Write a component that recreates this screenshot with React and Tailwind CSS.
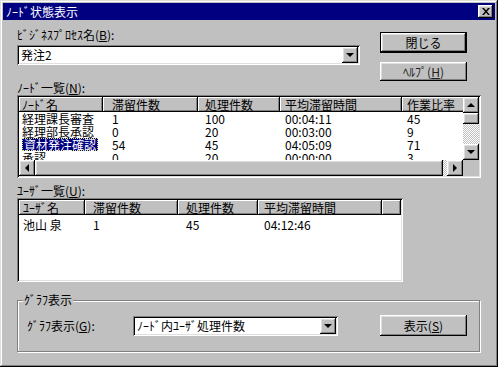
// App.jsx - Win9x style "node status" dialog
const raised = 'shadow-[inset_-1px_-1px_#000,inset_1px_1px_#fff,inset_-2px_-2px_#808080,inset_2px_2px_#dfdfdf]';
const sunken = 'shadow-[inset_1px_1px_#808080,inset_-1px_-1px_#fff,inset_2px_2px_#000,inset_-2px_-2px_#dfdfdf]';
const headerCell = 'shadow-[inset_-1px_-1px_#000,inset_1px_1px_#fff,inset_-2px_-2px_#808080]';

const nodeCols = [
  { label: 'ﾉｰﾄﾞ名', cls: 'w-[84px] pl-[3px]' },
  { label: '滞留件数', cls: 'w-[95px] pl-[9px]' },
  { label: '処理件数', cls: 'w-[82px] pl-[7px]' },
  { label: '平均滞留時間', cls: 'w-[122px] pl-[5px]' },
  { label: '作業比率', cls: 'w-[70px] pl-[5px]' },
];

const nodeRows = [
  ['経理課長審査', '1', '100', '00:04:11', '45'],
  ['経理部長承認', '0', '20', '00:03:00', '9'],
  ['資材発注確認', '54', '45', '04:05:09', '71'],
  ['承認', '0', '20', '00:00:00', '3'],
];

const userCols = [
  { label: 'ﾕｰｻﾞ名', cls: 'w-[66px] pl-[4px]' },
  { label: '滞留件数', cls: 'w-[93px] pl-[8px]' },
  { label: '処理件数', cls: 'w-[80px] pl-[8px]' },
  { label: '平均滞留時間', cls: 'w-[124px] pl-[6px]' },
  { label: '', cls: 'w-[19px]' },
];

const userRows = [['池山 泉', '1', '45', '04:12:46', '']];

function Arrow({ dir }) {
  if (dir === 'down') return <div className="w-0 h-0 border-x-[4px] border-x-transparent border-t-[4px] border-t-black" />;
  if (dir === 'up') return <div className="w-0 h-0 border-x-[4px] border-x-transparent border-b-[4px] border-b-black" />;
  if (dir === 'left') return <div className="w-0 h-0 border-y-[4px] border-y-transparent border-r-[4px] border-r-black" />;
  return <div className="w-0 h-0 border-y-[4px] border-y-transparent border-l-[4px] border-l-black" />;
}

function ArrowButton({ dir, className = '' }) {
  return (
    <div className={`bg-[#c0c0c0] flex items-center justify-center shrink-0 ${raised} ${className}`}>
      <Arrow dir={dir} />
    </div>
  );
}

const dither = 'bg-[repeating-conic-gradient(#fff_0%_25%,#c0c0c0_0%_50%)] bg-[length:2px_2px]';

function Button({ children, isDefault, className = '' }) {
  if (isDefault) {
    return (
      <div className={`w-[87px] border border-black ${className}`}>
        <div className={`h-full bg-[#c0c0c0] flex items-center justify-center ${raised}`}>{children}</div>
      </div>
    );
  }
  return (
    <div className={`w-[87px] bg-[#c0c0c0] flex items-center justify-center ${raised} ${className}`}>{children}</div>
  );
}

function Combo({ value, className = '' }) {
  return (
    <div className={`bg-white p-[2px] flex ${sunken} ${className}`}>
      <div className="flex-1 pl-[2px] leading-[15px] whitespace-nowrap overflow-hidden">{value}</div>
      <ArrowButton dir="down" className="w-[16px]" />
    </div>
  );
}

function Header({ cols }) {
  return (
    <div className="flex h-[15px] shrink-0">
      {cols.map((c, i) => (
        <div key={i} className={`${c.cls} shrink-0 h-full bg-[#c0c0c0] leading-[15px] whitespace-nowrap overflow-hidden ${headerCell}`}>
          {c.label}
        </div>
      ))}
    </div>
  );
}

function Rows({ cols, rows, selected }) {
  return rows.map((r, ri) => (
    <div key={ri} className="flex h-[13px] leading-[13px] shrink-0">
      {r.map((v, ci) => (
        <div key={ci} className={`${cols[ci].cls} ${ci === 0 ? 'pl-0' : ''} shrink-0 whitespace-nowrap overflow-hidden`}>
          {ci === 0 && ri === selected ? (
            <span className="inline-block bg-[#000080] text-white border border-dotted border-[#e0e080] leading-[11px] px-[1px]">{v}</span>
          ) : (
            v
          )}
        </div>
      ))}
    </div>
  ));
}

function NodeList() {
  return (
    <div className={`w-[464px] h-[83px] p-[2px] bg-white flex flex-col ${sunken}`}>
      <div className="flex h-[63px]">
        <div className="w-[444px] overflow-hidden flex flex-col">
          <Header cols={nodeCols} />
          <Rows cols={nodeCols} rows={nodeRows} selected={2} />
        </div>
        {/* vertical scrollbar */}
        <div className="w-[16px] flex flex-col">
          <ArrowButton dir="up" className="h-[16px]" />
          <div className={`h-[11px] bg-[#c0c0c0] ${raised}`} />
          <div className={`flex-1 ${dither}`} />
          <ArrowButton dir="down" className="h-[16px]" />
        </div>
      </div>
      {/* horizontal scrollbar */}
      <div className="flex h-[16px]">
        <div className="w-[444px] flex">
          <ArrowButton dir="left" className="w-[16px]" />
          <div className={`w-[408px] bg-[#c0c0c0] ${raised}`} />
          <div className={`flex-1 ${dither}`} />
          <ArrowButton dir="right" className="w-[16px]" />
        </div>
        <div className="w-[16px] bg-[#c0c0c0]" />
      </div>
    </div>
  );
}

function UserList() {
  return (
    <div className={`w-[386px] h-[84px] p-[2px] bg-white flex flex-col ${sunken}`}>
      <div className="overflow-hidden flex flex-col">
        <Header cols={userCols} />
        <div className="h-[3px]" />
        <Rows cols={userCols} rows={userRows} selected={-1} />
      </div>
    </div>
  );
}

export default function App() {
  return (
    <div className="w-[498px] h-[367px] bg-[#c0c0c0] p-[3px] text-black text-[12px] font-['Noto_Sans_CJK_JP',sans-serif] shadow-[inset_-1px_-1px_#000,inset_1px_1px_#dfdfdf,inset_-2px_-2px_#808080,inset_2px_2px_#fff]">
      {/* Title bar */}
      <div className="h-[17px] bg-[#000080] flex items-center justify-between pl-[3px] pr-[2px]">
        <span className="text-white leading-[15px]">ﾉｰﾄﾞ状態表示</span>
        <div className={`w-[15px] h-[13px] bg-[#c0c0c0] flex items-center justify-center ${raised}`}>
          <svg width="8" height="7" viewBox="0 0 8 7">
            <path d="M0 0h2l2 2.5L6 0h2L5 3.5 8 7H6L4 4.5 2 7H0l3-3.5z" fill="#000" />
          </svg>
        </div>
      </div>

      <div className="pl-[14px]">
        {/* Business process + buttons */}
        <div className="flex items-start mt-[8px] h-[53px]">
          <div className="w-[343px]">
            <div className="h-[14px] leading-[14px]">
              ﾋﾞｼﾞﾈｽﾌﾟﾛｾｽ名(<span className="underline">B</span>):
            </div>
            <Combo value="発注2" className="mt-[3px] h-[20px]" />
          </div>
          <div className="ml-[20px] mt-[4px] flex flex-col gap-[9px]">
            <Button isDefault className="h-[21px]">閉じる</Button>
            <Button className="h-[19px]">
              <span className="text-[#202020]">ﾍﾙﾌﾟ(<span className="underline">H</span>)</span>
            </Button>
          </div>
        </div>

        {/* Node list */}
        <div className="h-[13px] leading-[13px]">
          ﾉｰﾄﾞ一覧(<span className="underline">N</span>):
        </div>
        <div className="mt-[1px]">
          <NodeList />
        </div>

        {/* User list */}
        <div className="mt-[6px] h-[13px] leading-[13px]">
          ﾕｰｻﾞ一覧(<span className="underline">U</span>):
        </div>
        <div className="mt-[1px]">
          <UserList />
        </div>

        {/* Graph group */}
        <div className="relative mt-[18px] w-[463px] h-[52px] border border-[#808080] shadow-[1px_1px_#fff,inset_1px_1px_#fff]">
          <span className="absolute -top-[8px] left-[5px] bg-[#c0c0c0] px-[1px] leading-[14px]">ｸﾞﾗﾌ表示</span>
          <div className="flex items-center pl-[9px] mt-[14px]">
            <div className="w-[106px]">
              ｸﾞﾗﾌ表示(<span className="underline">G</span>):
            </div>
            <Combo value="ﾉｰﾄﾞ内ﾕｰｻﾞ処理件数" className="w-[205px] h-[20px]" />
            <Button className="ml-[42px] h-[21px]">
              表示(<span className="underline">S</span>)
            </Button>
          </div>
        </div>
      </div>
    </div>
  );
}
